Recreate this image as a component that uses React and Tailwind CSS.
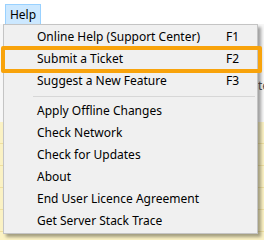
import React from "react";

const groups = [
  [
    { label: "Online Help (Support Center)", key: "F1" },
    { label: "Submit a Ticket", key: "F2" },
    { label: "Suggest a New Feature", key: "F3" },
  ],
  [
    { label: "Apply Offline Changes" },
    { label: "Check Network" },
    { label: "Check for Updates" },
    { label: "About" },
    { label: "End User Licence Agreement" },
    { label: "Get Server Stack Trace" },
  ],
];

const MenuItem = ({ label, shortcut }) => (
  <div className="flex items-center h-[22px] pl-[33px] text-black">
    <span className="w-[189px] whitespace-nowrap">{label}</span>
    <span>{shortcut}</span>
  </div>
);

const App = () => {
  return (
    <div
      className="relative w-[264px] h-[240px] overflow-hidden bg-white text-[12px] leading-none"
      style={{ fontFamily: '"Noto Sans", "Open Sans", sans-serif' }}
    >
      {/* Menu bar */}
      <div className="h-[24px] bg-white flex items-end pl-[5px]">
        <div className="h-[20px] w-[36px] flex items-center justify-center bg-[#cce8ff] border border-b-0 border-[#99d1ff]">
          Help
        </div>
      </div>

      {/* Window content behind the menu */}
      <div className="flex flex-col h-[216px]">
        <div className="h-[98px] bg-[#f7f7f7] flex justify-end">
          <span className="pt-[56px] text-[#555] text-[12px] w-[6px] overflow-hidden">te</span>
        </div>
        <div className="flex-1 bg-[#fbf2c4] flex flex-col">
          <div className="h-[22px] border-b border-[#efe0a0]" />
          <div className="h-[22px] border-b border-[#efe0a0]" />
          <div className="h-[22px] border-b border-[#efe0a0]" />
          <div className="h-[22px] border-b border-[#efe0a0]" />
          <div className="h-[22px] border-b border-[#efe0a0]" />
        </div>
      </div>

      {/* Dropdown */}
      <div className="absolute left-[3px] top-[24px] w-[255px] h-[210px] bg-[#f0f0f0] border border-[#c4c4c4] shadow-[3px_3px_3px_rgba(0,0,0,0.35)] pt-[1px]">
        {groups.map((items, i) => (
          <div key={i}>
            {i > 0 && (
              <div className="h-[8px] flex items-center">
                <div className="ml-[29px] w-[222px] border-t border-[#d7d7d7]" />
              </div>
            )}
            {items.map((it) => (
              <MenuItem key={it.label} label={it.label} shortcut={it.key} />
            ))}
          </div>
        ))}
      </div>

      {/* Highlight callout */}
      <div className="absolute left-[1px] top-[46px] w-[261px] h-[27px] border-[4px] border-[#f8a30b] rounded-[2px]" />
    </div>
  );
};

export default App;
